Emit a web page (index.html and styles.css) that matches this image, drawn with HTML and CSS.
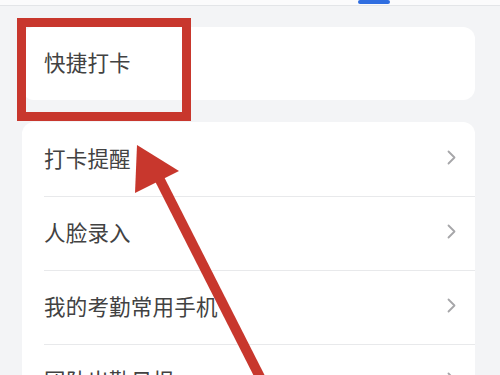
FILE: index.html
```html
<!DOCTYPE html>
<html lang="zh-CN">
<head>
<meta charset="utf-8">
<link rel="stylesheet" href="styles.css">
</head>
<body>
<div class="topbar"><span class="tab-indicator"></span></div>
<main class="content">
  <section class="card single">
    <div class="row"><span class="label">快捷打卡</span></div>
  </section>
  <section class="card list">
    <div class="row"><span class="label">打卡提醒</span><svg class="chev" width="9" height="15" viewBox="0 0 9 15"><polyline points="1.5,1.5 7.5,7.5 1.5,13.5" fill="none" stroke="#a6a6a9" stroke-width="1.8" stroke-linecap="round" stroke-linejoin="round"/></svg></div>
    <div class="row"><span class="label">人脸录入</span><svg class="chev" width="9" height="15" viewBox="0 0 9 15"><polyline points="1.5,1.5 7.5,7.5 1.5,13.5" fill="none" stroke="#a6a6a9" stroke-width="1.8" stroke-linecap="round" stroke-linejoin="round"/></svg></div>
    <div class="row"><span class="label">我的考勤常用手机</span><svg class="chev" width="9" height="15" viewBox="0 0 9 15"><polyline points="1.5,1.5 7.5,7.5 1.5,13.5" fill="none" stroke="#a6a6a9" stroke-width="1.8" stroke-linecap="round" stroke-linejoin="round"/></svg></div>
    <div class="row"><span class="label">团队出勤日报</span><svg class="chev" width="9" height="15" viewBox="0 0 9 15"><polyline points="1.5,1.5 7.5,7.5 1.5,13.5" fill="none" stroke="#a6a6a9" stroke-width="1.8" stroke-linecap="round" stroke-linejoin="round"/></svg></div>
  </section>
</main>
<div class="highlight-box"></div>
<svg class="arrow" width="500" height="375" viewBox="0 0 500 375">
  <line x1="158" y1="176" x2="264" y2="385" stroke="#c8372d" stroke-width="10"/>
  <polygon points="137,145 135,193 179,171" fill="#c8372d"/>
</svg>
</body>
</html>
```
FILE: styles.css
```css
html, body {
  margin: 0;
  padding: 0;
  width: 500px;
  height: 375px;
  overflow: hidden;
  background: #f3f4f6;
  font-family: "Noto Sans CJK SC", "Noto Sans", sans-serif;
}
.topbar {
  position: relative;
  height: 5px;
  background: #fbfbfc;
  border-bottom: 1px solid #e3e5e8;
}
.tab-indicator {
  position: absolute;
  left: 358px;
  top: 0;
  width: 32px;
  height: 4px;
  border-radius: 2px;
  background: #2f6de0;
}
.content {
  padding: 21px 25px 0 22px;
  display: flex;
  flex-direction: column;
  gap: 22px;
}
.card {
  background: #ffffff;
  border-radius: 12px;
}
.card.single .row {
  height: 73px;
}
.row {
  height: 74px;
  margin-left: 22px;
  padding: 0 19px 4px 0;
  display: flex;
  align-items: center;
  justify-content: space-between;
  box-sizing: border-box;
}
.card.list .row + .row {
  border-top: 1px solid #e8e9eb;
}
.label {
  font-size: 21.5px;
  color: #424242;
  letter-spacing: 0.2px;
}
.chev {
  display: block;
}
.highlight-box {
  position: absolute;
  left: 17px;
  top: 18px;
  width: 174px;
  height: 103px;
  box-sizing: border-box;
  border: 9px solid #c8372d;
}
.arrow {
  position: absolute;
  left: 0;
  top: 0;
}
```
